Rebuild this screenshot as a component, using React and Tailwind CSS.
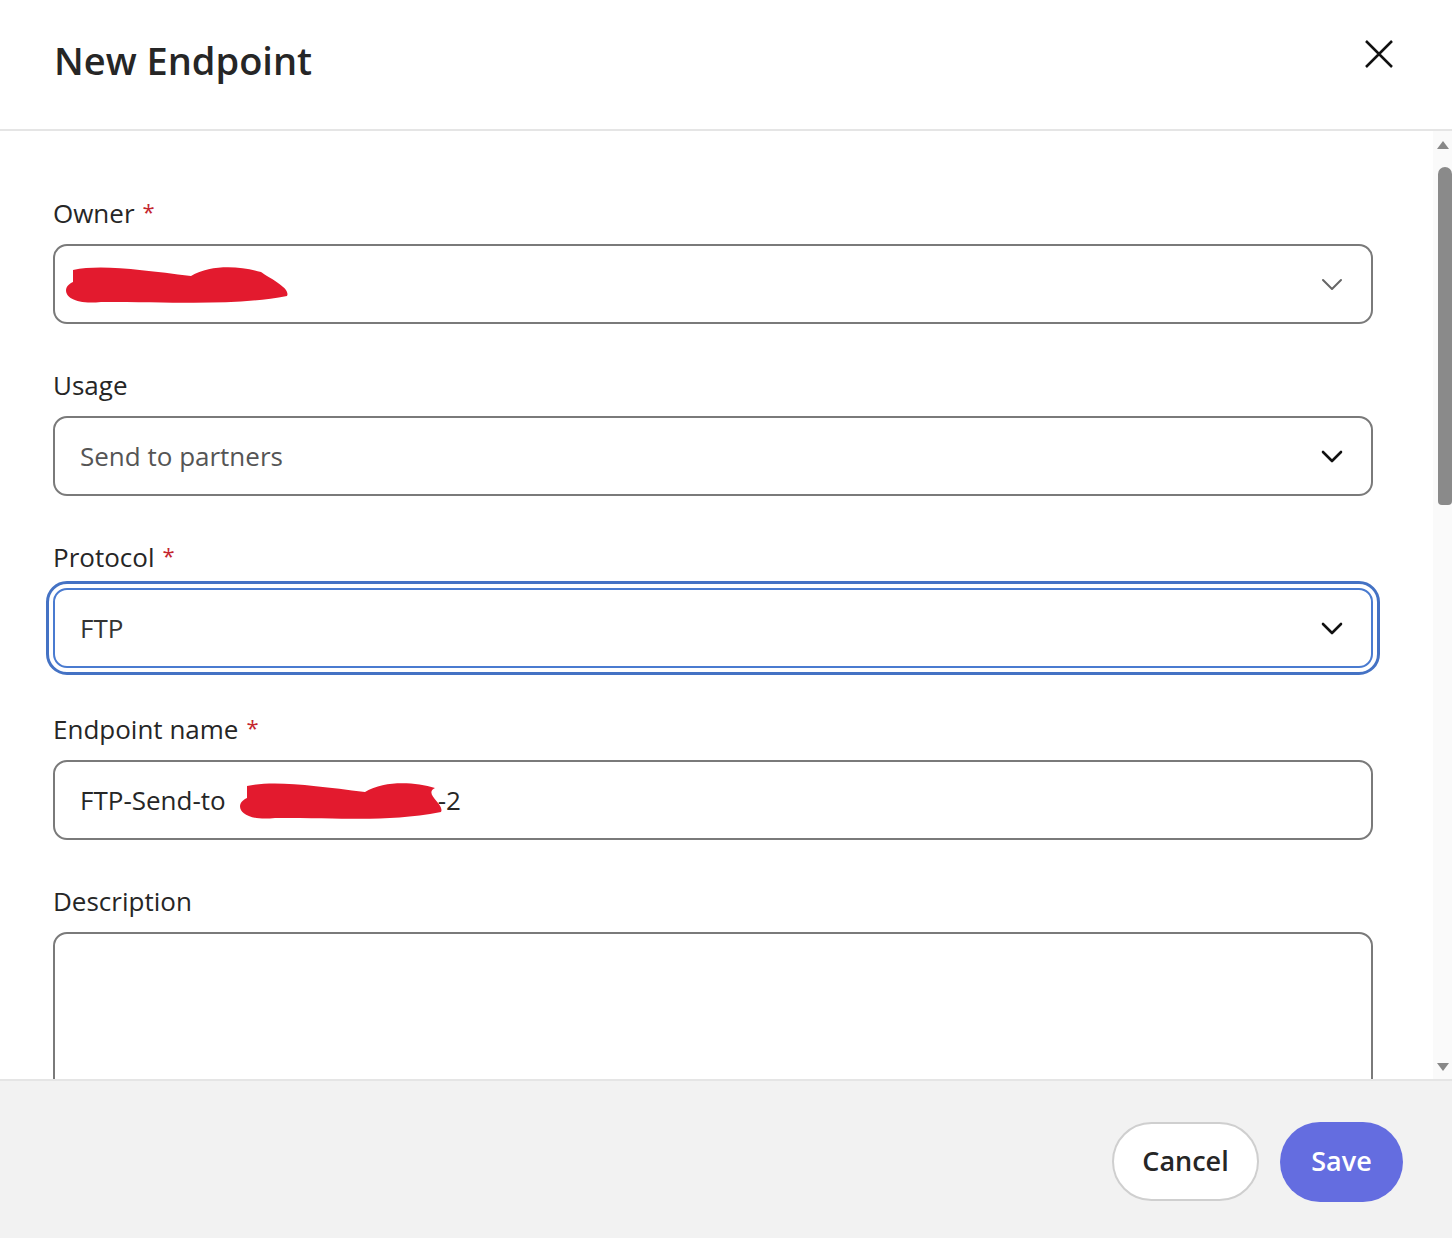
const font = { fontFamily: '"Open Sans", "Noto Sans", sans-serif' };

function Chevron({ gray }) {
  return (
    <svg width="22" height="14" viewBox="0 0 22 14" fill="none">
      <path d="M2 3l9 9 9-9" stroke={gray ? "#666" : "#111"} strokeWidth={gray ? 2 : 2.6} strokeLinecap="round" strokeLinejoin="round" />
    </svg>
  );
}

function Label({ children, required }) {
  return (
    <div className="text-[26px] text-[#262626] leading-none h-[50px] pt-[6px]">
      {children}
      {required && <span className="text-[#c4262e] text-[22px] align-top ml-2">*</span>}
    </div>
  );
}

function Scribble({ w }) {
  return (
    <svg width={w} height="48" viewBox={`0 0 ${w} 48`} className="absolute left-0 top-0">
      <path d={`M12 10 C40 4, 80 10, 130 16 C150 4, 180 6, 200 12 C ${w - 24} 18, ${w - 2} 28, ${w - 6} 36 C ${w - 60} 46, 120 42, 40 42 C 4 46, -2 28, 12 22 Z`} fill="#e31a2e" />
    </svg>
  );
}

export default function App() {
  return (
    <div className="w-[1452px] h-[1238px] bg-white flex flex-col overflow-hidden" style={font}>
      <div className="h-[131px] border-b-2 border-[#e5e5e5] flex items-center justify-between pl-[54px] pr-[58px] shrink-0">
        <h1 className="text-[38px] font-semibold text-[#262626] -mt-[8px]">New Endpoint</h1>
        <svg width="30" height="30" viewBox="0 0 30 30" className="-mt-[22px]">
          <path d="M2 2l26 26M28 2L2 28" stroke="#111" strokeWidth="2.5" />
        </svg>
      </div>
      <div className="flex flex-1 min-h-0">
        <div className="flex-1 pl-[53px] pr-[60px] pt-[63px] overflow-hidden">
          <Label required>Owner</Label>
          <div className="relative h-[80px] border-2 border-[#7a7a7a] rounded-[14px] flex items-center justify-between pl-[25px] pr-[28px]">
            <span className="text-[26px] text-[#aaa]">RE</span>
            <div className="absolute left-[6px] top-[14px] w-[240px] h-[48px]"><Scribble w={232} /></div>
            <Chevron gray />
          </div>
          <div className="h-[42px]" />
          <Label>Usage</Label>
          <div className="h-[80px] border-2 border-[#7a7a7a] rounded-[14px] flex items-center justify-between pl-[25px] pr-[28px]">
            <span className="text-[26px] text-[#555]">Send to partners</span>
            <Chevron />
          </div>
          <div className="h-[42px]" />
          <Label required>Protocol</Label>
          <div className="h-[80px] border-2 border-[#4a7bd0] rounded-[14px] outline-[3px] outline-solid outline-[#4472c4] outline-offset-[4px] flex items-center justify-between pl-[25px] pr-[28px]">
            <span className="text-[26px] text-[#333]">FTP</span>
            <Chevron />
          </div>
          <div className="h-[42px]" />
          <Label required>Endpoint name</Label>
          <div className="relative h-[80px] border-2 border-[#7a7a7a] rounded-[14px] flex items-center px-[25px]">
            <span className="text-[26px] text-[#262626]">FTP-Send-to<span className="inline-block w-[212px]" />-2</span>
            <div className="absolute left-[180px] top-[14px] w-[216px] h-[48px]"><Scribble w={212} /></div>
          </div>
          <div className="h-[42px]" />
          <Label>Description</Label>
          <div className="h-[200px] border-2 border-[#7a7a7a] rounded-[14px]" />
        </div>
        <div className="w-[19px] bg-[#fafafa] flex flex-col items-center pt-[10px] shrink-0">
          <div className="w-0 h-0 border-l-[6px] border-r-[6px] border-b-[8px] border-l-transparent border-r-transparent border-b-[#888]" />
          <div className="w-[14px] h-[338px] bg-[#8a8a8a] rounded-t-[7px] rounded-b-[4px] mt-[18px] ml-[4px]" />
          <div className="flex-1" />
          <div className="w-0 h-0 border-l-[6px] border-r-[6px] border-t-[8px] border-l-transparent border-r-transparent border-t-[#888] mb-[8px]" />
        </div>
      </div>
      <div className="h-[159px] bg-[#f2f2f2] border-t-2 border-[#e5e5e5] flex items-center justify-end gap-[21px] pr-[49px] pt-[4px] shrink-0">
        <button className="h-[79px] w-[147px] rounded-full border-2 border-[#cfcfcf] bg-white text-[27px] font-semibold text-[#262626]">Cancel</button>
        <button className="h-[80px] w-[123px] rounded-full bg-[#646de0] text-[27px] font-semibold text-white">Save</button>
      </div>
    </div>
  );
}
